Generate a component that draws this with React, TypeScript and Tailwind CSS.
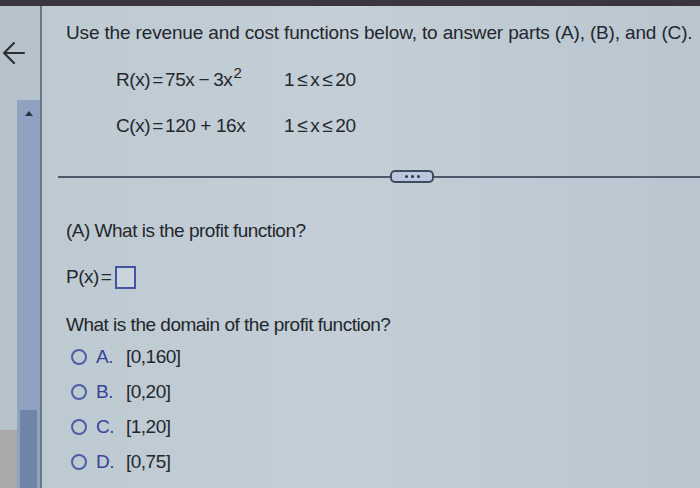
import React from "react";

const options = [
  { letter: "A.", value: "[0,160]" },
  { letter: "B.", value: "[0,20]" },
  { letter: "C.", value: "[1,20]" },
  { letter: "D.", value: "[0,75]" },
];

const Range: React.FC = () => (
  <span className="whitespace-nowrap">
    1<span className="mx-[3px]">≤</span>x<span className="mx-[3px]">≤</span>20
  </span>
);

const App: React.FC = () => {
  return (
    <div
      className="w-[700px] h-[488px] overflow-hidden flex flex-col bg-[#3b3540] text-[#23272e]"
      style={{ fontFamily: '"Liberation Sans", Arial, sans-serif' }}
    >
      <div className="h-[6px] shrink-0" />
      <div className="flex flex-1 bg-gradient-to-r from-[#bdc9d1] via-[#c3ced6] to-[#b9c6d0]">
        {/* left rail */}
        <div className="w-[42px] shrink-0 flex flex-col bg-[#b7c3cb] border-r-2 border-[#6b7787]">
          <div className="h-[94px] shrink-0 pt-[34px] pl-[2px]">
            <svg width="24" height="26" viewBox="0 0 24 26" fill="none">
              <path
                d="M22 13H2M12 3L2 13l10 10"
                stroke="#2d3036"
                strokeWidth="2.2"
                strokeLinecap="round"
                strokeLinejoin="round"
              />
            </svg>
          </div>
          <div className="flex flex-1">
            <div className="w-[17px] flex flex-col justify-end">
              <div className="h-[58px] bg-[#a9a9ab]" />
            </div>
            <div className="flex-1 flex flex-col bg-[#8fa2c1]">
              <div className="h-[26px] flex items-center justify-center">
                <svg width="8" height="5" viewBox="0 0 8 5">
                  <path d="M0 5L4 0l4 5z" fill="#2b3140" />
                </svg>
              </div>
              <div className="flex-1" />
              <div className="h-[78px] mx-[3px] bg-[#6f85a8]" />
            </div>
          </div>
        </div>

        {/* main */}
        <div className="flex-1 flex flex-col">
          <div className="pl-6 pt-[14px]">
            <p className="text-[19px] leading-[26px] tracking-[-0.15px] whitespace-nowrap">
              Use the revenue and cost functions below, to answer parts (A), (B), and (C).
            </p>
            <div className="pl-[50px] pt-[21px] flex flex-col gap-[19px] text-[19px] leading-[26px] tracking-[-0.4px]">
              <div className="flex">
                <span className="w-[168px] whitespace-nowrap">
                  R(x)<span className="mx-[2px]">=</span>75x<span className="mx-[4px]">−</span>3x
                  <span className="text-[15px] relative -top-[8px] ml-[1px]">2</span>
                </span>
                <Range />
              </div>
              <div className="flex">
                <span className="w-[168px] whitespace-nowrap">
                  C(x)<span className="mx-[2px]">=</span>120 + 16x
                </span>
                <Range />
              </div>
            </div>
          </div>

          <div className="ml-4 mt-[31px] flex items-center">
            <div className="w-[332px] h-[2px] bg-[#4f5868]" />
            <div className="w-[44px] h-[13px] rounded-[5px] border-2 border-[#3f4a5f] bg-[#b9c8de] flex items-center justify-center gap-[3px]">
              <span className="w-[3px] h-[3px] rounded-full bg-[#2d3446]" />
              <span className="w-[3px] h-[3px] rounded-full bg-[#2d3446]" />
              <span className="w-[3px] h-[3px] rounded-full bg-[#2d3446]" />
            </div>
            <div className="flex-1 h-[2px] bg-[#4f5868]" />
          </div>

          <div className="pl-6 pt-[35px] text-[19px] leading-[26px] tracking-[-0.5px]">
            <p>(A) What is the profit function?</p>
            <div className="mt-[20px] flex items-center">
              <span>P(x)<span className="mx-[2px]">=</span></span>
              <span className="ml-[2px] w-[21px] h-[23px] border-2 border-[#4654a0] bg-[#c9d4dc]" />
            </div>
            <p className="mt-[22px]">What is the domain of the profit function?</p>
            <div className="mt-[6px] pl-[5px] flex flex-col gap-[9px]">
              {options.map((o) => (
                <div key={o.letter} className="flex items-center h-[26px]">
                  <span className="w-[16px] h-[16px] rounded-full border-2 border-[#4b5fa8]" />
                  <span className="ml-[9px] w-[30px] text-[#34449a]">{o.letter}</span>
                  <span>{o.value}</span>
                </div>
              ))}
            </div>
          </div>
        </div>
      </div>
    </div>
  );
};

export default App;
